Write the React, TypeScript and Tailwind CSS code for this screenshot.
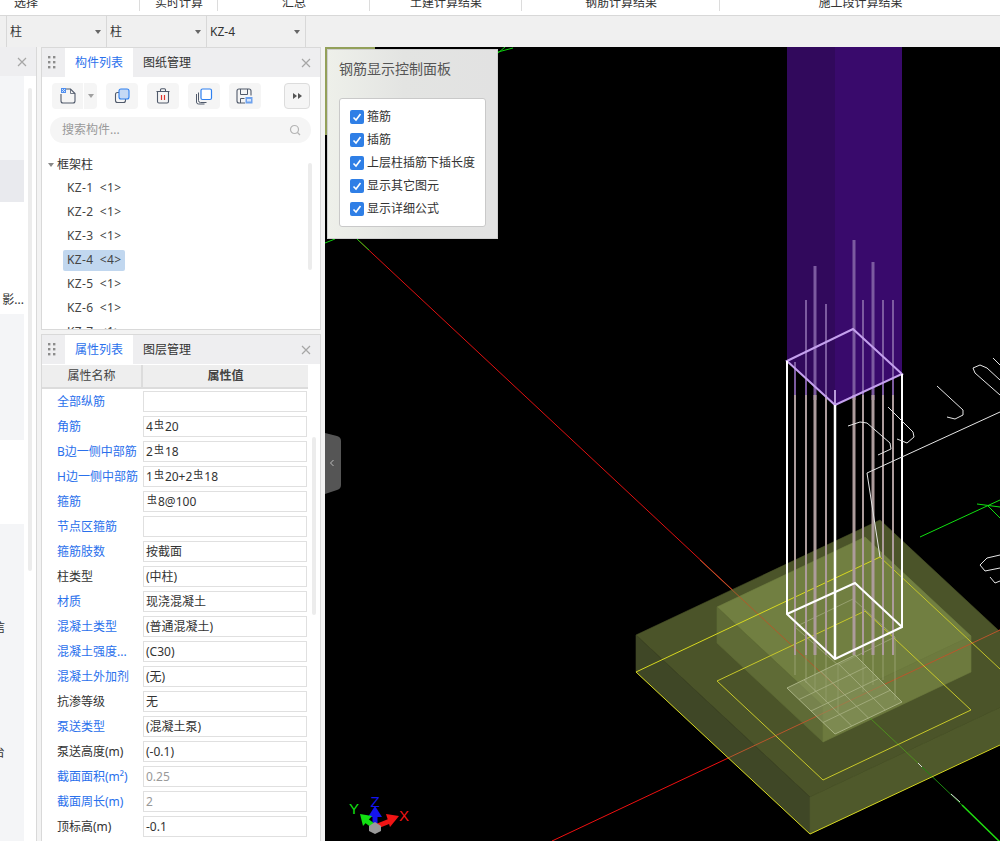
import { ReactNode } from "react";

const tabs = [
  { label: "选择", w: "w-[140px]", start: true },
  { label: "实时计算", w: "w-[78px]" },
  { label: "汇总", w: "w-[152px]" },
  { label: "土建计算结果", w: "w-[152px]" },
  { label: "钢筋计算结果", w: "w-[198px]" },
  { label: "施工段计算结果", w: "w-[281px]", last: true },
];

const steel = <span className="relative -top-[2px] mx-[1px] text-[10px]">虫</span>;

const props: { label: string; value?: ReactNode; blue?: boolean; gray?: boolean }[] = [
  { label: "全部纵筋", blue: true },
  { label: "角筋", value: <>4{steel}20</>, blue: true },
  { label: "B边一侧中部筋", value: <>2{steel}18</>, blue: true },
  { label: "H边一侧中部筋", value: <>1{steel}20+2{steel}18</>, blue: true },
  { label: "箍筋", value: <>{steel}8@100</>, blue: true },
  { label: "节点区箍筋", blue: true },
  { label: "箍筋肢数", value: "按截面", blue: true },
  { label: "柱类型", value: "(中柱)" },
  { label: "材质", value: "现浇混凝土", blue: true },
  { label: "混凝土类型", value: "(普通混凝土)", blue: true },
  { label: "混凝土强度...", value: "(C30)", blue: true },
  { label: "混凝土外加剂", value: "(无)", blue: true },
  { label: "抗渗等级", value: "无" },
  { label: "泵送类型", value: "(混凝土泵)", blue: true },
  { label: "泵送高度(m)", value: "(-0.1)" },
  { label: "截面面积(m²)", value: "0.25", blue: true, gray: true },
  { label: "截面周长(m)", value: "2", blue: true, gray: true },
  { label: "顶标高(m)", value: "-0.1" },
];

const checks = ["箍筋", "插筋", "上层柱插筋下插长度", "显示其它图元", "显示详细公式"];

const Grip = () => (
  <svg width="23" height="29" viewBox="0 0 23 29" className="shrink-0">
    {[8, 13, 18].map((y) =>
      [6, 11].map((x) => <rect key={`${x}-${y}`} x={x} y={y} width="2.4" height="2.4" fill="#8c8c8c" />)
    )}
  </svg>
);

const Close = () => (
  <svg width="10" height="10" viewBox="0 0 10 10" className="shrink-0">
    <path d="M1 1l8 8M9 1L1 9" stroke="#a6a6a6" strokeWidth="1.2" />
  </svg>
);

const PanelHeader = ({ active, other }: { active: string; other: string }) => (
  <div className="flex h-[29px] shrink-0 items-stretch bg-[#eeeef0] pr-[9px]">
    <Grip />
    <div className="flex w-[68px] items-center justify-center bg-white text-[#2a70ec]">{active}</div>
    <div className="flex w-[68px] items-center justify-center text-[#333]">{other}</div>
    <div className="ml-auto flex items-center">
      <Close />
    </div>
  </div>
);

const IconBtn = ({ children, w = "w-[32px]" }: { children: ReactNode; w?: string }) => (
  <div className={`flex h-[26px] ${w} items-center justify-center rounded-[4px] bg-[#f5f5f5]`}>{children}</div>
);

const Toolbar = () => (
  <div className="flex h-[26px] items-center pl-[10px] pr-[10px]">
    <div className="flex h-[26px] w-[45px] rounded-[4px] bg-[#f5f5f5]">
      <div className="flex w-[32px] items-center justify-center border-r border-white">
        <svg width="20" height="18" viewBox="0 0 20 18">
          <path d="M7 2h5.5L17 6.5V14a2 2 0 0 1-2 2H5a2 2 0 0 1-2-2V7" fill="none" stroke="#505a6b" strokeWidth="1.1" />
          <path d="M12.5 2v4.500H17" fill="none" stroke="#505a6b" strokeWidth="0.8" />
          <rect x="3" y="1" width="5" height="5" fill="#4f8ff0" />
          <path d="M4 2h1v1H4zM6 2h1v1H6zM5 3h1v1H5zM4 4h1v1H4zM6 4h1v1H6z" fill="#cfe0fa" />
        </svg>
      </div>
      <div className="flex flex-1 items-center justify-center">
        <div className="h-0 w-0 border-x-[3px] border-t-[4px] border-x-transparent border-t-[#a0a0a0]" />
      </div>
    </div>
    <div className="ml-[9px] flex gap-[9px]">
      <IconBtn>
        <svg width="18" height="18" viewBox="0 0 18 18">
          <rect x="2.500" y="5.500" width="10" height="10" rx="2" fill="none" stroke="#505a6b" strokeWidth="1.1" />
          <rect x="6" y="2" width="10" height="10" rx="2" fill="#c5d9f5" stroke="#2f80f0" strokeWidth="1.1" />
        </svg>
      </IconBtn>
      <IconBtn>
        <svg width="16" height="18" viewBox="0 0 16 18">
          <path d="M1.500 4.500h13M5.500 4V2.800a1 1 0 0 1 1-1h3a1 1 0 0 1 1 1V4" fill="none" stroke="#505a6b" strokeWidth="1.100" />
          <path d="M2.500 4.500V14.500a1.500 1.500 0 0 0 1.500 1.500h8a1.500 1.500 0 0 0 1.500-1.500V4.500" fill="none" stroke="#505a6b" strokeWidth="1.100" />
          <path d="M6.500 8v5M9.500 8v5" stroke="#e0342c" strokeWidth="1.200" />
        </svg>
      </IconBtn>
      <IconBtn>
        <svg width="18" height="18" viewBox="0 0 18 18">
          <path d="M3.500 5.500v8a2 2 0 0 0 2 2h6" fill="none" stroke="#505a6b" strokeWidth="1" />
          <path d="M1.500 7v8a2 2 0 0 0 2 2h6" fill="none" stroke="#505a6b" strokeWidth="1" />
          <rect x="6" y="2" width="10.500" height="10.500" rx="1.500" fill="#fff" stroke="#2f80f0" strokeWidth="1.200" />
        </svg>
      </IconBtn>
      <IconBtn>
        <svg width="18" height="18" viewBox="0 0 18 18">
          <path d="M9 16H3a2 2 0 0 1-2-2V4a2 2 0 0 1 2-2h10a2 2 0 0 1 2 2v4.500" fill="none" stroke="#505a6b" strokeWidth="1.100" />
          <path d="M4.500 2v5.500h7V2M4.500 16v-4.500h4" fill="none" stroke="#505a6b" strokeWidth="1" />
          <rect x="9.500" y="10" width="7" height="6.500" fill="#6ea2ee" />
          <rect x="11" y="12" width="4" height="2.500" fill="#d8e6fb" />
        </svg>
      </IconBtn>
    </div>
    <div className="ml-auto flex h-[26px] w-[26px] items-center justify-center gap-[1px] rounded-[4px] border border-[#dcdcdc] bg-[#f5f5f5]">
      <div className="h-0 w-0 border-y-[3px] border-l-[4px] border-y-transparent border-l-[#555]" />
      <div className="h-0 w-0 border-y-[3px] border-l-[4px] border-y-transparent border-l-[#555]" />
    </div>
  </div>
);

const ComponentPanel = () => (
  <div className="flex h-[283px] shrink-0 flex-col overflow-hidden border border-[#d9d9d9] bg-white">
    <PanelHeader active="构件列表" other="图纸管理" />
    <div className="relative flex-1 pt-[6px]">
      <Toolbar />
      <div className="ml-[8px] mr-[9px] mt-[7px] flex h-[26px] translate-y-[1px] items-center justify-between rounded-full bg-[#f5f5f5] pl-[12px] pr-[10px] text-[#999]">
        <span>搜索构件...</span>
        <svg width="12" height="12" viewBox="0 0 12 12">
          <circle cx="5.500" cy="5.500" r="4" fill="none" stroke="#b4b4b4" strokeWidth="1.200" />
          <path d="M8.500 8.500l2.500 2.500" stroke="#b4b4b4" strokeWidth="1.200" />
        </svg>
      </div>
      <div className="mt-[11px] flex h-[23px] items-center pl-[6px] text-[#333]">
        <div className="mr-[3px] h-0 w-0 border-x-[3px] border-t-[4px] border-x-transparent border-t-[#888]" />
        框架柱
      </div>
      <div className="pl-[21px]">
        {["KZ-1 <1>", "KZ-2 <1>", "KZ-3 <1>", "KZ-4 <4>", "KZ-5 <1>", "KZ-6 <1>", "KZ-7 <1>"].map((k) => {
          const [name, count] = k.split(" ");
          return (
            <div key={k} className="flex h-[24px] items-center">
              <span className={`flex h-[21px] items-center gap-[6px] rounded-[2px] px-[4px] tracking-[0.4px] text-[#444] ${k === "KZ-4 <4>" ? "bg-[#c1d7ef]" : ""}`}>
                <span>{name}</span>
                <span>{count}</span>
              </span>
            </div>
          );
        })}
      </div>
      <div className="absolute right-[8px] top-[86px] h-[107px] w-[4px] rounded-full bg-[#ececec]" />
    </div>
  </div>
);

const PropertyPanel = () => (
  <div className="mt-[4px] flex min-h-0 flex-1 flex-col overflow-hidden border border-b-0 border-[#d9d9d9] bg-white">
    <PanelHeader active="属性列表" other="图层管理" />
    <div className="relative pt-[1px]">
      <div className="flex h-[24px] w-[266px] border-b-2 border-[#dcdcdc] bg-[#eeeeee] text-[#444]">
        <div className="flex w-[101px] items-center justify-center border-r-2 border-[#dcdcdc]">属性名称</div>
        <div className="flex flex-1 items-center justify-center font-semibold">属性值</div>
      </div>
      <div>
        {props.map((p) => (
          <div key={p.label} className="flex h-[25px] w-[266px] items-center">
            <div className={`w-[101px] truncate pl-[15px] ${p.blue ? "text-[#2a70ec]" : "text-[#333]"}`}>{p.label}</div>
            <div className={`flex h-[21px] w-[164px] items-center border border-[#e0e0e0] px-[2px] ${p.gray ? "text-[#999]" : "text-[#333]"}`}>
              {p.value}
            </div>
          </div>
        ))}
      </div>
      <div className="absolute left-[270px] top-[73px] h-[178px] w-[4px] rounded-full bg-[#ececec]" />
    </div>
  </div>
);

// thin strip on the far left, only its right edge is on screen
const LeftPanel = () => (
  <div className="relative flex w-[37px] shrink-0 flex-col overflow-hidden border-r border-[#d9d9d9] bg-white">
    <div className="flex h-[29px] shrink-0 items-center justify-end bg-[#eeeef0] pr-[9px]">
      <Close />
    </div>
    <div className="w-[24px] text-[#333]">
      <div className="h-[84px] bg-[#f4f5f7]" />
      <div className="h-[42px] bg-[#e9eaee]" />
      <div className="flex h-[112px] items-center justify-end whitespace-nowrap pt-[84px]">影...</div>
      <div className="h-[126px] bg-[#f4f5f7]" />
      <div className="h-[84px]" />
      <div className="h-[317px] overflow-hidden bg-[#f4f5f7]">
        <div className="flex h-[113px] items-end whitespace-nowrap">
          <span className="-ml-[7px]">信</span>
        </div>
        <div className="mt-[107px] flex whitespace-nowrap">
          <span className="-ml-[7px]">台</span>
        </div>
      </div>
    </div>
    <div className="absolute left-[28px] top-[41px] h-[483px] w-[4px] rounded-full bg-[#ececec]" />
  </div>
);

const pts = (a: number[][]) => a.map((p) => p.join(",")).join(" ");
const lerp = (a: number[], b: number[], t: number) => [a[0] + (b[0] - a[0]) * t, a[1] + (b[1] - a[1]) * t];

const rebars = [
  { x: 795, top: 362, w: 2 },
  { x: 806, top: 300, w: 2 },
  { x: 815, top: 266, w: 3 },
  { x: 826, top: 304, w: 2 },
  { x: 854, top: 240, w: 3 },
  { x: 863, top: 300, w: 2 },
  { x: 873, top: 262, w: 3 },
  { x: 883, top: 300, w: 2 },
  { x: 893, top: 300, w: 2 },
];

const Scene = () => {
  const pl = [787, 688], pf = [835, 734], pr = [902, 702], pb = [855, 655];
  const steps = [0.25, 0.5, 0.75];
  return (
    <svg viewBox="325 47 675 794" className="block h-full w-full bg-black">
      <polyline points="326,135 326,48 375,48" fill="none" stroke="#93a05a" strokeWidth="3" />
      {/* axes behind the footing */}
      <path d="M358 240L845 695" stroke="#e01010" strokeWidth="1" />
      <path d="M552 841L1000 630" stroke="#f01010" strokeWidth="1" />
      <path d="M920 537L1000 500M977 504L1000 507M988 506L1000 518" stroke="#10e010" strokeWidth="1" fill="none" />
      <path d="M498 52L513 48M505 47L498 53M325 243L335 239M357 239L369 250" stroke="#10d010" strokeWidth="1" />
      {/* footing, lower step */}
      <polygon points="636,635 880,520 1054,682 810,797" fill="#4b5429" stroke="#4b5429" strokeWidth="0.6" />
      <polygon points="636,635 636,672 810,834 810,797" fill="#3f4726" stroke="#3f4726" strokeWidth="0.6" />
      <polygon points="810,797 810,834 1054,719 1054,682" fill="#4f592b" stroke="#4f592b" strokeWidth="0.6" />
      {/* footing, upper step */}
      <polygon points="717,607 865,537 971,636 823,706" fill="#717f41" stroke="#717f41" strokeWidth="0.6" />
      <polygon points="717,607 717,643 823,742 823,706" fill="#5f6b36" stroke="#5f6b36" strokeWidth="0.6" />
      <polygon points="823,706 823,742 971,672 971,636" fill="#6d7a3e" stroke="#6d7a3e" strokeWidth="0.6" />
      <path d="M700 560L845 695" stroke="#b05a2a" strokeWidth="1" />
      <path d="M728 758L1000 630" stroke="#b9562c" strokeWidth="1" />
      <path d="M870 718L920 765" stroke="#4f8f1e" strokeWidth="1" />
      <path d="M920 765L962 805" stroke="#1c8a10" strokeWidth="1" />
      <path d="M962 805L1000 842" stroke="#20e010" strokeWidth="1.500" />
      <path d="M918 763l4 4M951 794l9 8" stroke="#ddd" strokeWidth="1" />
      <polyline points="880,557 636,672 810,834 1000,745" fill="none" stroke="#d8d820" strokeWidth="1" />
      <path d="M880 557L1000 669" stroke="#c4c428" strokeWidth="1" />
      <polygon points="865,611 717,681 823,780 971,710" fill="none" stroke="#c8c82a" strokeWidth="1" />
      {/* lower cage */}
      <g stroke="#a3ab7e" strokeOpacity="0.75" strokeWidth="1" fill="none">
        <polygon points="795,627 853,599 895,637 838,665" />
        <path d="M795 627V675M806 620V683M815 616V692M826 611V702M838 665V712M863 605V692M873 615V685M883 625V680M895 637V700" />
      </g>
      <polygon points={pts([pl, pf, pr, pb])} fill="#8b9761" fillOpacity="0.55" stroke="#a9b283" />
      <g stroke="#a9b283" strokeOpacity="0.8" strokeWidth="1">
        {steps.map((t) => {
          const a = lerp(pl, pf, t), b = lerp(pb, pr, t), c = lerp(pl, pb, t), d = lerp(pf, pr, t);
          return (
            <g key={t}>
              <line x1={a[0]} y1={a[1]} x2={b[0]} y2={b[1]} />
              <line x1={c[0]} y1={c[1]} x2={d[0]} y2={d[1]} />
            </g>
          );
        })}
      </g>
      {/* upper column, translucent purple */}
      <polygon points="787,47 835,47 835,405 787,361" fill="#31095c" />
      <polygon points="835,47 902,47 902,374 835,405" fill="#390a6c" />
      {rebars.map((r) => (
        <g key={r.x}>
          <line x1={r.x} y1={r.top} x2={r.x} y2="400" stroke="#7c5ba0" strokeWidth={r.w} />
          <line x1={r.x} y1="395" x2={r.x} y2="655" stroke="#ad9c9c" strokeWidth={r.w} />
        </g>
      ))}
      <line x1="835" y1="405" x2="835" y2="390" stroke="#b79ad8" strokeWidth="2" />
      {/* column box */}
      <polygon points="787,361 853,329 902,374 835,405" fill="none" stroke="#c4a0ee" strokeWidth="2" />
      <path d="M787 361V614L835 659L902 627V374" fill="none" stroke="#fff" strokeWidth="2" />
      <path d="M835 405V659" stroke="#fff" strokeWidth="2.500" />
      <path d="M787 614L855 583L902 627" fill="none" stroke="#fff" strokeWidth="2" />
      {/* dimension wires */}
      <g fill="none" stroke="#e6e6e6" strokeWidth="1">
        <polyline points="1000,412 867,473 880,557" />
        <polyline points="848,426 860,422 867,423 890,443 891,449 878,455" />
        <polyline points="888,407 913,432 914,437 907,443 897,439" />
        <polyline points="937,386 963,410 963,415 955,419 947,417" />
        <polyline points="1000,395 975,373 973,368 980,365 987,368 1000,380" />
        <polyline points="993,358 1000,365" />
        <polyline points="1000,555 987,558 980,565 985,571 1000,568" />
        <polyline points="990,577 995,583 1000,581" />
      </g>
      {/* axis gizmo */}
      <path d="M375 827V815" stroke="#1414f0" strokeWidth="5" />
      <polygon points="375,806 368,817 382,817" fill="#1414f0" />
      <path d="M375 827L364 819" stroke="#12e012" strokeWidth="5" />
      <polygon points="360,814 372,816 363,826" fill="#12e012" />
      <path d="M375 827L390 821" stroke="#f01414" strokeWidth="5" />
      <polygon points="399,816 386,814 390,827" fill="#f01414" />
      <polygon points="375,822 381,826 381,831 375,834 369,831 369,826" fill="#9a9a9a" />
      <text x="354" y="814" textAnchor="middle" fontSize="15" fill="#12e012" fontFamily="'Liberation Sans', sans-serif">Y</text>
      <text x="375" y="807" textAnchor="middle" fontSize="15" fill="#1414f0" fontFamily="'Liberation Sans', sans-serif">Z</text>
      <text x="404" y="821" textAnchor="middle" fontSize="15" fill="#f01414" fontFamily="'Liberation Sans', sans-serif">X</text>
    </svg>
  );
};

const RebarPanel = () => (
  <div className="absolute left-[2px] top-[2px] h-[190px] w-[171px] border border-[#cfcfcf] bg-gradient-to-r from-[#eef0ea] via-[#e3e4e2] via-45% to-[#e2e2e2] px-[11px]">
    <div className="mt-[9px] text-[14px] leading-[20px] text-[#555]">钢筋显示控制面板</div>
    <div className="mt-[19px] h-[129px] rounded-[3px] border border-[#c9c9c9] bg-white pl-[10px] pt-[7px]">
      {checks.map((c) => (
        <div key={c} className="flex h-[23px] items-center gap-[3px] pb-[2px] text-[#333]">
          <div className="flex h-[14px] w-[14px] items-center justify-center rounded-[2px] bg-[#2f7fe6]">
            <svg width="10" height="10" viewBox="0 0 10 10">
              <path d="M1.500 5.500L4 8l4.500-6" fill="none" stroke="#fff" strokeWidth="1.600" />
            </svg>
          </div>
          {c}
        </div>
      ))}
    </div>
  </div>
);

export default function App() {
  return (
    <div className="flex h-[841px] w-[1000px] flex-col overflow-hidden bg-[#f3f3f3] font-['Noto_Sans','Noto_Sans_CJK_SC',sans-serif] text-[12px]">
      <div className="flex h-[16px] shrink-0 overflow-hidden border-b border-[#d8d8d8] bg-white text-[#333]">
        {tabs.map((t) => (
          <div key={t.label} className={`relative ${t.w} shrink-0 ${t.start ? "pl-[14px]" : "text-center"}`}>
            <div className="-mt-[6px] leading-[18px]">{t.label}</div>
            {!t.last && <div className="absolute right-0 top-0 h-[11px] w-px bg-[#dcdcdc]" />}
          </div>
        ))}
      </div>
      <div className="flex h-[31px] shrink-0 bg-[#f0f0f0] pl-[6px] text-[#333]">
        {["柱", "柱", "KZ-4"].map((v, i) => (
          <div key={i} className="flex w-[100px] items-center justify-between border-l border-[#d8d8d8] pl-[3px] pr-[5px] last:border-r">
            <span>{v}</span>
            <div className="h-0 w-0 border-x-[3px] border-t-[4px] border-x-transparent border-t-[#666]" />
          </div>
        ))}
      </div>
      <div className="flex min-h-0 flex-1">
        <LeftPanel />
        <div className="ml-[4px] flex w-[280px] shrink-0 flex-col">
          <ComponentPanel />
          <PropertyPanel />
        </div>
        <div className="relative ml-[4px] min-w-0 flex-1">
          <Scene />
          <RebarPanel />
          <svg width="16" height="61" viewBox="0 0 16 61" className="absolute left-0 top-[386px]">
            <path d="M0 0L12 3Q16 4 16 8V52Q16 56 12 57L0 61Z" fill="#555" />
            <path d="M8.500 27l-3 3 3 3" fill="none" stroke="#bbb" strokeWidth="1" />
          </svg>
        </div>
      </div>
    </div>
  );
}
